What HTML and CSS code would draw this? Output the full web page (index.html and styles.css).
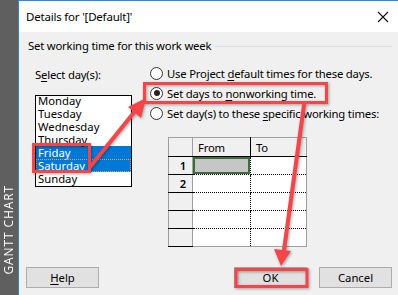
FILE: index.html
```html
<!DOCTYPE html>
<html lang="en">
<head>
    <meta charset="UTF-8">
    <meta name="viewport" content="width=device-width, initial-scale=1.0">
    <title>Details for '[Default]'</title>
    <link rel="stylesheet" href="styles.css">
</head>
<body>
    <div class="screen">
        <aside class="side-tab"><span>GANTT CHART</span></aside>
        <div class="dialog">
            <div class="title-bar">
                <span class="title">Details for '[Default]'</span>
                <svg class="close" width="12" height="12" viewBox="0 0 12 12">
                    <path d="M1 1 L11 11 M11 1 L1 11" stroke="#111" stroke-width="1.1" fill="none"/>
                </svg>
            </div>
            <div class="dialog-body">
                <div class="group-title">
                    <span>Set working time for this work week</span>
                    <div class="rule"></div>
                </div>
                <div class="main">
                    <div class="days">
                        <div class="days-label">S<u>e</u>lect day(s):</div>
                        <div class="day-list">
                            <div class="day-items">
                                <div class="day">Monday</div>
                                <div class="day">Tuesday</div>
                                <div class="day">Wednesday</div>
                                <div class="day">Thursday</div>
                                <div class="day selected">Friday</div>
                                <div class="day selected focused">Saturday</div>
                                <div class="day">Sunday</div>
                            </div>
                        </div>
                    </div>
                    <div class="options">
                        <div class="radio-row"><span class="radio"></span><span>Use Project <u>d</u>efault times for these days.</span></div>
                        <div class="radio-row"><span class="radio checked"></span><span>Set days to <u>n</u>onworking time.</span></div>
                        <div class="radio-row"><span class="radio"></span><span>Set day(s) to these <u>s</u>pecific working times:</span></div>
                        <table class="times">
                            <tr class="head">
                                <th class="num"></th>
                                <th class="from">From</th>
                                <th class="to">To</th>
                            </tr>
                            <tr><td class="num">1</td><td class="from"><div class="active-cell"></div></td><td class="to"></td></tr>
                            <tr><td class="num">2</td><td class="from"></td><td class="to"></td></tr>
                            <tr><td class="num"></td><td class="from"></td><td class="to"></td></tr>
                            <tr><td class="num"></td><td class="from"></td><td class="to"></td></tr>
                            <tr class="last"><td class="num"></td><td class="from"></td><td class="to"></td></tr>
                        </table>
                    </div>
                </div>
                <div class="buttons">
                    <button class="btn"><u>H</u>elp</button>
                    <div class="btn-spacer"></div>
                    <button class="btn">OK</button>
                    <button class="btn">Cancel</button>
                </div>
            </div>
        </div>

        <!-- red callouts drawn over the dialog -->
        <svg class="marks" width="398" height="295" viewBox="0 0 398 295">
            <g fill="none" stroke="#f2464a" stroke-width="3">
                <rect x="33.5" y="144.5" width="56" height="27"/>
                <rect x="144.5" y="83.5" width="182" height="19"/>
                <rect x="236" y="269.5" width="71" height="17"/>
            </g>
            <g stroke="#f2464a" stroke-width="4" stroke-linecap="round">
                <line x1="90" y1="167" x2="136" y2="110"/>
                <line x1="304" y1="105" x2="284" y2="250"/>
            </g>
            <g fill="#f2464a">
                <polygon points="146,98 141,118 128,107"/>
                <polygon points="281,266 274,249 291,251"/>
            </g>
        </svg>
    </div>
</body>
</html>
```

FILE: styles.css
```css
body {
    margin: 0;
    padding: 0;
    font-family: "Segoe UI", "Noto Sans", sans-serif;
    font-size: 11.3px;
    letter-spacing: -0.2px;
    color: #000;
}
u {
    text-decoration: underline;
    text-underline-offset: 2px;
}
.screen {
    position: relative;
    width: 398px;
    height: 295px;
    display: flex;
    overflow: hidden;
}
.side-tab {
    width: 18px;
    flex-shrink: 0;
    background: #5f5f5f;
    display: flex;
    flex-direction: column;
    justify-content: flex-end;
    align-items: center;
    padding-bottom: 20px;
    box-sizing: border-box;
}
.side-tab span {
    writing-mode: vertical-rl;
    transform: rotate(180deg);
    color: #fff;
    font-family: "Open Sans", sans-serif;
    font-size: 12px;
    letter-spacing: 0.9px;
    line-height: 12px;
}
.dialog {
    flex: 1;
    min-width: 0;
    display: flex;
    flex-direction: column;
    border-left: 1px solid #2b88d8;
    border-top: 1px solid #2b88d8;
    background: #f0f0f0;
}
.title-bar {
    height: 31px;
    background: #fff;
    display: flex;
    align-items: center;
    justify-content: space-between;
    padding: 0 8px 0 7px;
}
.title {
    font-size: 11.5px;
}
.close {
    margin-right: 1px;
}
.dialog-body {
    flex: 1;
    display: flex;
    flex-direction: column;
    padding: 6px 6px 7px 7px;
}
.group-title {
    display: flex;
    align-items: center;
    padding-left: 2px;
    line-height: 16px;
}
.rule {
    flex: 1;
    height: 1px;
    background: #dcdcdc;
    margin-left: 4px;
}
.main {
    display: flex;
    margin-top: 9px;
}
.days {
    margin-left: 9px;
    width: 97px;
    flex-shrink: 0;
}
.days-label {
    margin-top: 4px;
    line-height: 16px;
}
.day-list {
    margin-top: 12px;
    height: 92px;
    border: 1px solid #000;
    box-sizing: border-box;
    background: #fff;
    overflow: hidden;
}
.day-items {
    margin-top: -2px;
}
.day {
    height: 13px;
    line-height: 13px;
    padding-left: 2px;
    letter-spacing: 0;
}
.day.selected {
    background: #0078d7;
    color: #fff;
}
.day.focused {
    outline: 1px dotted #e0a060;
    outline-offset: -1px;
}
.options {
    margin-left: 17px;
}
.radio-row {
    height: 20px;
    display: flex;
    align-items: center;
    padding-left: 1px;
    white-space: nowrap;
}
.radio {
    width: 11px;
    height: 11px;
    flex-shrink: 0;
    border: 1px solid #333;
    border-radius: 50%;
    background: #fff;
    margin-right: 4px;
    position: relative;
}
.radio.checked::after {
    content: "";
    position: absolute;
    left: 2.5px;
    top: 2.5px;
    width: 6px;
    height: 6px;
    border-radius: 50%;
    background: #222;
}
.times {
    margin: 14px 0 0 19px;
    border-collapse: collapse;
    background: #fff;
}
.times th,
.times td {
    padding: 0;
    font-weight: normal;
    text-align: left;
}
.times .head th {
    height: 18px;
    background: #f0f0f0;
    border-top: 1px solid #a0a0a0;
    border-bottom: 1px solid #000;
    padding-left: 5px;
    vertical-align: bottom;
    line-height: 16px;
}
.times .num {
    width: 23px;
    background: #f0f0f0;
    border-left: 1px solid #a0a0a0;
    border-right: 1px solid #a0a0a0;
    border-bottom: 1px solid #000;
    text-align: center;
    padding-left: 0;
}
.times td {
    height: 17px;
}
.times td.num {
    text-align: right;
    padding-right: 6px;
    width: 17px;
    font-weight: 600;
}
.times .head th.num {
    padding-left: 0;
    border-left: 1px solid #a0a0a0;
}
.times th.from {
    width: 52px;
    border-right: 1px solid #000;
}
.times th.to {
    width: 50px;
    border-right: 1px solid #a0a0a0;
}
.times td.from {
    border-right: 1px dotted #000;
    border-bottom: 1px dotted #000;
}
.times td.to {
    border-right: 1px solid #a0a0a0;
    border-bottom: 1px dotted #000;
}
.times .last td.from,
.times .last td.to {
    border-bottom: 1px solid #a0a0a0;
}
.active-cell {
    height: 13px;
    border: 2px solid #3c6e3c;
    background: #c6c6c6;
}
.buttons {
    margin-top: auto;
    display: flex;
    align-items: center;
}
.btn {
    width: 73px;
    height: 21px;
    border: 1px solid #adadad;
    background: #e1e1e1;
    font-family: "Segoe UI", "Noto Sans", sans-serif;
    font-size: 11.3px;
    color: #000;
    padding: 0;
}
.btn-spacer {
    flex: 1;
}
.btn + .btn {
    margin-left: 12px;
}
.marks {
    position: absolute;
    left: 0;
    top: 0;
    pointer-events: none;
    filter: drop-shadow(1px 1px 1.5px rgba(0, 0, 0, 0.35));
}
```
